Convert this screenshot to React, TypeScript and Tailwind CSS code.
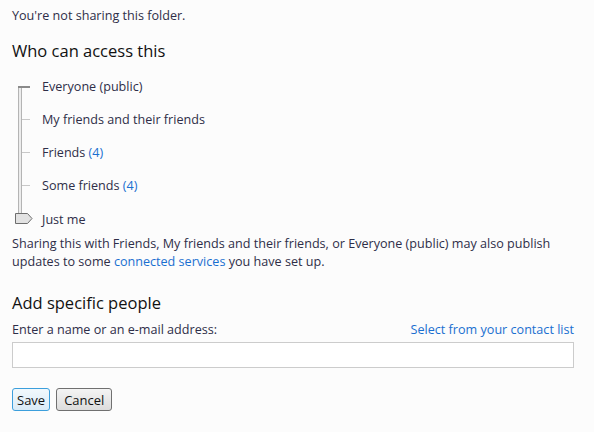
import React from 'react';

const levels = [
  { label: 'Everyone (public)' },
  { label: 'My friends and their friends' },
  { label: 'Friends', count: 4 },
  { label: 'Some friends', count: 4 },
];

const App: React.FC = () => {
  return (
    <div
      className="min-h-screen w-[594px] bg-[#fcfcfc] pl-3 pr-5 pt-[7px] text-[12.6px] text-[#2e2e48]"
      style={{ fontFamily: '"Segoe UI", "Open Sans", "Noto Sans", sans-serif' }}
    >
      <p className="leading-[18px]">You're not sharing this folder.</p>
      <h2 className="mt-[15px] text-[16.5px] leading-[22px] text-[#111]">Who can access this</h2>

      {/* access slider */}
      <div className="relative mt-[16px] pl-[30px]">
        <div className="absolute left-[6px] top-[8px] h-[130px] w-[4px] border-x border-[#b4b4b4] bg-[#ececec]" />
        {levels.map((l, i) => (
          <div key={l.label} className="relative flex h-[33px] items-start leading-[18px]">
            <div
              className={
                i === 0
                  ? 'absolute left-[-24px] top-[8px] h-[2px] w-[12px] bg-[#8a8a8a]'
                  : 'absolute left-[-20px] top-[8px] h-px w-[8px] bg-[#c8c8c8]'
              }
            />
            <span>
              {l.label}
              {l.count !== undefined && <span className="text-[#1a6fd0]"> ({l.count})</span>}
            </span>
          </div>
        ))}
        <div className="relative mt-px flex h-[24px] items-start leading-[18px]">
          <svg className="absolute left-[-27px] top-[2px]" width="18" height="11" viewBox="0 0 18 11">
            <path d="M0.5 0.5 H12.5 L17 5.5 L12.5 10.5 H0.5 Z" fill="#e2e2e2" stroke="#6e6e6e" />
          </svg>
          <span>Just me</span>
        </div>
      </div>

      <p className="leading-[18px]">
        Sharing this with Friends, My friends and their friends, or Everyone (public) may also publish
        updates to some <span className="text-[#1a6fd0]">connected services</span> you have set up.
      </p>

      <h2 className="mt-[21px] text-[16.5px] leading-[22px] text-[#111]">Add specific people</h2>
      <div className="mt-[7px] flex items-center justify-between leading-[18px]">
        <span>Enter a name or an e-mail address:</span>
        <span className="text-[#1a6fd0]">Select from your contact list</span>
      </div>
      <div className="mt-[3px] h-[26px] w-full border border-[#cccccc] bg-white" />

      <div className="mt-[20px] flex gap-[6px]">
        <button className="h-[23px] rounded-[3px] border border-[#3c9fdc] bg-gradient-to-b from-[#f2f9fd] to-[#d9ebf7] px-[4px] text-[13px] leading-[18px] text-[#111]">
          Save
        </button>
        <button className="h-[23px] rounded-[3px] border border-[#707070] bg-gradient-to-b from-[#f4f4f4] to-[#dcdcdc] px-[7px] text-[13px] leading-[18px] text-[#111]">
          Cancel
        </button>
      </div>
    </div>
  );
};

export default App;
